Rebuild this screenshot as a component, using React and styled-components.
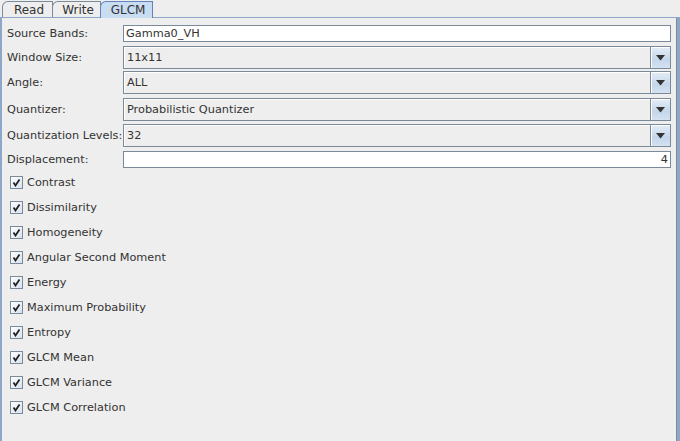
import React from 'react'
import styled, { createGlobalStyle } from 'styled-components'

const TextColor = "#333333";
const EdgeColor = "#7a8a99";
const PanelBg = "#eeeeee";

const GlobalStyle = createGlobalStyle`
  html, body {
    margin: 0;
    padding: 0;
    background: ${PanelBg};
  }
  body {
    font-family: 'DejaVu Sans', 'Liberation Sans', sans-serif;
    font-size: 11.3px;
    color: ${TextColor};
  }
`

const Window = styled.div`
  width: 680px;
  height: 441px;
  overflow: hidden;
  background: ${PanelBg};
`

const TabStrip = styled.div`
  display: flex;
  height: 17px;
  padding-left: 2px;
  align-items: flex-end;
`

const Tab = styled.div`
  position: relative;
  box-sizing: border-box;
  width: ${p => p.$w}px;
  margin-left: ${p => p.$first ? 0 : -1}px;
  padding-left: 3px;
  display: flex;
  align-items: center;
  justify-content: center;
  font-size: 12px;
  border: 1px solid ${p => p.$active ? "#6382bf" : EdgeColor};
  border-bottom: none;
  border-top-left-radius: 6px 6px;
  background: ${p => p.$active ? "#c8ddf2" : PanelBg};
  color: ${TextColor};
  z-index: ${p => p.$active ? 2 : 1};
  height: ${p => p.$active ? 17 : 16}px;
  margin-bottom: ${p => p.$active ? -1 : 0}px;
`

const Panel = styled.div`
  box-sizing: border-box;
  height: 424px;
  border-top: 1px solid #8ea6c8;
  border-left: 2px solid #8ea6c8;
  border-right: 3px solid #8ea6c8;
  box-shadow: inset -1px 0 0 ${EdgeColor};
  padding: 7px 6px 0 5px;
`

const Form = styled.div`
  display: grid;
  grid-template-columns: 116px 1fr;
  align-items: center;
`

const Label = styled.div`
  margin-top: ${p => p.$mt || 0}px;
  height: ${p => p.$h}px;
  display: flex;
  align-items: center;
  white-space: nowrap;
`

const TextField = styled.div`
  box-sizing: border-box;
  margin-top: ${p => p.$mt || 0}px;
  height: 17px;
  background: #ffffff;
  border: 1px solid ${EdgeColor};
  padding: 0 2px;
  display: flex;
  align-items: center;
  justify-content: ${p => p.$right ? "flex-end" : "flex-start"};
  white-space: nowrap;
`

const Combo = styled.div`
  box-sizing: border-box;
  margin-top: ${p => p.$mt || 0}px;
  height: 23px;
  display: flex;
  border: 1px solid ${EdgeColor};
  background: ${PanelBg};
  box-shadow: inset 1px 1px 0 #ffffff;
`

const ComboText = styled.div`
  flex: 1;
  display: flex;
  align-items: center;
  padding-left: 3px;
`

const ArrowButton = styled.div`
  width: 19px;
  border-left: 1px solid ${EdgeColor};
  background: linear-gradient(#e4edf7, #c4d6ea 60%, #d4e2f1);
  box-shadow: inset 1px 1px 0 #ffffff;
  display: flex;
  align-items: center;
  justify-content: center;
`

const CheckList = styled.div`
  margin-top: 2px;
  display: flex;
  flex-direction: column;
`

const CheckRow = styled.div`
  height: 25px;
  display: flex;
  align-items: center;
  padding-left: 3px;
  gap: 4px;
`

const Box = styled.div`
  box-sizing: border-box;
  width: 13px;
  height: 13px;
  border: 1px solid ${EdgeColor};
  background: linear-gradient(135deg, #ffffff, #d6e2ef);
  display: flex;
  align-items: center;
  justify-content: center;
`

const Arrow = () => (
  <svg width="9" height="6" viewBox="0 0 9 6">
    <path d="M0 0H9L4.5 5.5Z" fill="#333333" />
  </svg>
)

const Check = () => (
  <svg width="9" height="9" viewBox="0 0 9 9">
    <path d="M1.5 4.5L3.5 7.5L7.5 1.5" fill="none" stroke="#222222" strokeWidth="1.8" />
  </svg>
)

const checks = [
  "Contrast", "Dissimilarity", "Homogeneity", "Angular Second Moment", "Energy",
  "Maximum Probability", "Entropy", "GLCM Mean", "GLCM Variance", "GLCM Correlation",
]

const combos = [
  { label: "Window Size:", value: "11x11", mt: 4 },
  { label: "Angle:", value: "ALL", mt: 2 },
  { label: "Quantizer:", value: "Probabilistic Quantizer", mt: 4 },
  { label: "Quantization Levels:", value: "32", mt: 3 },
]

const App = () => {
  return (
    <Window>
      <GlobalStyle />
      <TabStrip>
        <Tab $w={51} $first>Read</Tab>
        <Tab $w={49}>Write</Tab>
        <Tab $w={53} $active>GLCM</Tab>
      </TabStrip>
      <Panel>
        <Form>
          <Label $h={17}>Source Bands:</Label>
          <TextField>Gamma0_VH</TextField>
          {combos.map(c => (
            <React.Fragment key={c.label}>
              <Label $h={23} $mt={c.mt}>{c.label}</Label>
              <Combo $mt={c.mt}>
                <ComboText>{c.value}</ComboText>
                <ArrowButton><Arrow /></ArrowButton>
              </Combo>
            </React.Fragment>
          ))}
          <Label $h={17} $mt={4}>Displacement:</Label>
          <TextField $mt={4} $right>4</TextField>
        </Form>
        <CheckList>
          {checks.map(name => (
            <CheckRow key={name}>
              <Box><Check /></Box>
              <span>{name}</span>
            </CheckRow>
          ))}
        </CheckList>
      </Panel>
    </Window>
  )
}

export default App
